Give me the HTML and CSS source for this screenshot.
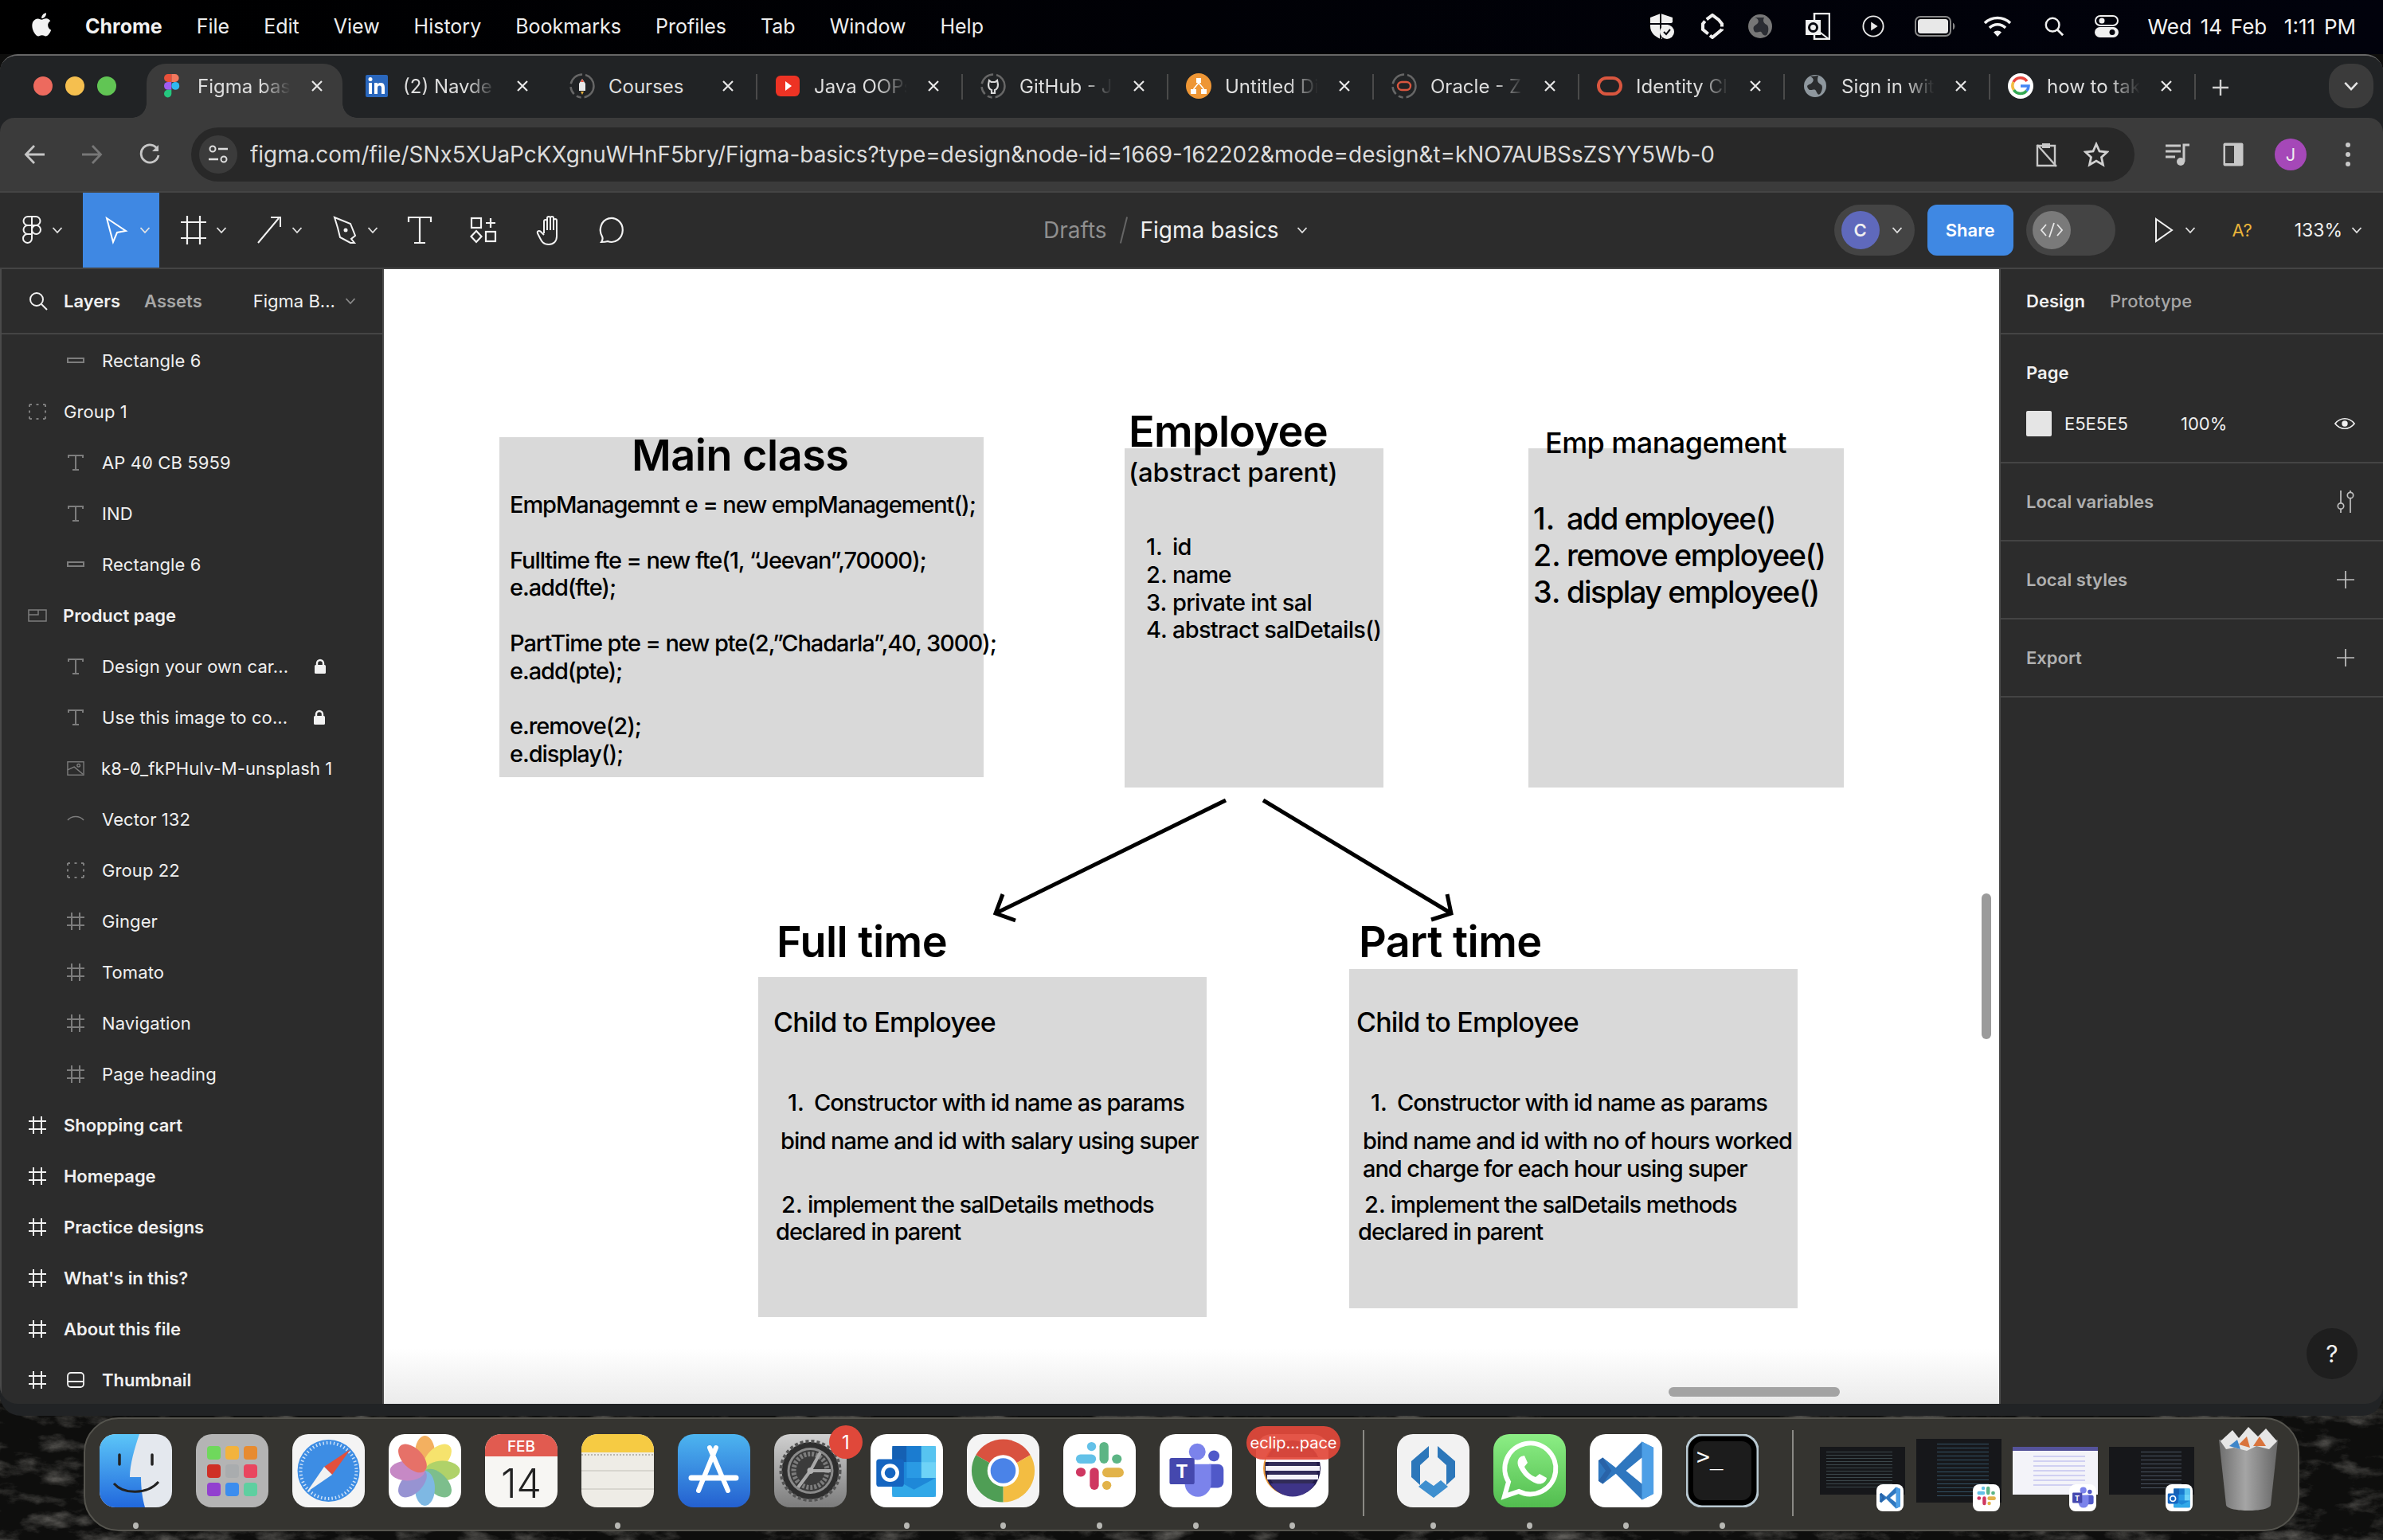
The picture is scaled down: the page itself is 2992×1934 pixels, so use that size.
FILE: index.html
```html
<!DOCTYPE html>
<html lang="en">
<head>
<meta charset="utf-8">
<title>Figma basics</title>
<link rel="stylesheet" href="styles.css">
</head>
<body>
<svg class="wallpaper" aria-hidden="true"><defs><filter id="rock" x="0" y="0" width="100%" height="100%"><feTurbulence type="fractalNoise" baseFrequency="0.02 0.045" numOctaves="6" seed="23"/><feColorMatrix values="0 0 0 0 0.26  0 0 0 0 0.25  0 0 0 0 0.23  1.5 0 0 0 -0.72"/></filter></defs><rect width="100%" height="100%" fill="#0e0e0d"/><rect width="100%" height="100%" filter="url(#rock)"/></svg>

<svg class="defs" aria-hidden="true">
<defs>
<linearGradient id="gBlue" x1="0" y1="0" x2="0" y2="1"><stop offset="0" stop-color="#4db5f0"/><stop offset="1" stop-color="#2460d0"/></linearGradient>
<linearGradient id="gGrey" x1="0" y1="0" x2="0" y2="1"><stop offset="0" stop-color="#d0d0d0"/><stop offset="1" stop-color="#7c7c7c"/></linearGradient>
<linearGradient id="gGreen" x1="0" y1="0" x2="0" y2="1"><stop offset="0" stop-color="#8cee85"/><stop offset="1" stop-color="#52bd4f"/></linearGradient>
<linearGradient id="gTrash" x1="0" y1="0" x2="1" y2="0"><stop offset="0" stop-color="#6e6e6e"/><stop offset=".45" stop-color="#a5a5a5"/><stop offset="1" stop-color="#666"/></linearGradient>
<linearGradient id="gFinder" x1="0" y1="0" x2="0" y2="1"><stop offset="0" stop-color="#5cc6f8"/><stop offset="1" stop-color="#2168dd"/></linearGradient>
</defs>
<symbol id="s-chrome" viewBox="0 0 100 100"><path d="M50 50L15.4 30A40 40 0 0 1 84.6 30Z" fill="#d9523f"/><path d="M50 50L84.6 30A40 40 0 0 1 50 90Z" fill="#f3bd42"/><path d="M50 50L50 90A40 40 0 0 1 15.4 30Z" fill="#4f9e55"/><circle cx="50" cy="50" r="20" fill="#fff"/><circle cx="50" cy="50" r="16" fill="#4a83e8"/></symbol>
<symbol id="s-slack" viewBox="0 0 100 100"><rect x="16" y="26" width="29" height="13" rx="6.5" fill="#63c1e8"/><rect x="32" y="8" width="13" height="13" rx="6.5" fill="#63c1e8"/><rect x="50" y="8" width="13" height="31" rx="6.5" fill="#5cb585"/><rect x="68" y="26" width="14" height="13" rx="6.5" fill="#5cb585"/><rect x="54" y="45" width="31" height="14" rx="7" fill="#e2b34a"/><rect x="54" y="64" width="13" height="13" rx="6.5" fill="#e2b34a"/><rect x="36" y="45" width="13" height="32" rx="6.5" fill="#cf3761"/><rect x="16" y="45" width="14" height="13" rx="6.5" fill="#cf3761"/></symbol>
<symbol id="s-teams" viewBox="0 0 100 100"><circle cx="76" cy="28" r="8" fill="#5059c9"/><rect x="62" y="40" width="28" height="34" rx="8" fill="#5059c9"/><circle cx="52" cy="22" r="12" fill="#7b83eb"/><path d="M34 40H72V68A19 19 0 0 1 34 68Z" fill="#7b83eb"/><rect x="12" y="31" width="36" height="38" rx="3" fill="#4548ae"/></symbol>
<symbol id="s-outlook" viewBox="0 0 100 100"><rect x="30" y="16" width="60" height="70" rx="4" fill="#1e88d8"/><rect x="30" y="16" width="20" height="22" fill="#1560b3"/><rect x="50" y="16" width="20" height="22" fill="#1b7cd0"/><rect x="70" y="16" width="20" height="22" fill="#57c4f0"/><rect x="50" y="38" width="20" height="22" fill="#2a9ae4"/><rect x="70" y="38" width="20" height="22" fill="#6ed3f7"/><path d="M30 60L60 76 90 60V86H30Z" fill="#31a8e8"/><rect x="8" y="34" width="38" height="38" rx="4" fill="#1565c0"/><circle cx="27" cy="53" r="10" fill="none" stroke="#fff" stroke-width="5"/></symbol>
<symbol id="s-vscode" viewBox="0 0 100 100"><path d="M72 10L88 18V82L72 90 36 54 18 68 12 64V36L18 32 36 46Z" fill="#2f77bf"/><path d="M72 10L88 18V82L72 90Z" fill="#4d9fe6"/><path d="M72 32L50 50 72 68Z" fill="#fff"/><path d="M12 36L18 32 30 50 18 68 12 64 22 50Z" fill="#2963a8"/></symbol>
<symbol id="s-t" viewBox="0 0 22 22"><path d="M2 5V2H20V5M11 2V20M7 20H15" fill="none" stroke="currentColor" stroke-width="2"/></symbol>
<symbol id="s-hash" viewBox="0 0 22 22"><path d="M0 6H22M0 16H22M6 0V22M16 0V22" fill="none" stroke="currentColor" stroke-width="2"/></symbol>
<symbol id="s-rect" viewBox="0 0 22 22"><rect x="1" y="8" width="20" height="5" fill="none" stroke="currentColor" stroke-width="2"/></symbol>
<symbol id="s-group" viewBox="0 0 22 22"><path d="M1 2H4M9.500 2H12.500M18 2H21M1 20H4M9.500 20H12.500M18 20H21M1 2V5M21 2V5M1 9.500V12.500M21 9.500V12.500M1 17V20M21 17V20" fill="none" stroke="currentColor" stroke-width="2"/></symbol>
<symbol id="s-lock" viewBox="0 0 16 20"><path d="M4 9V6A4 4 0 0 1 12 6V9" fill="none" stroke="currentColor" stroke-width="2.400"/><rect x="1" y="8" width="14" height="11" rx="1.500" fill="currentColor"/></symbol>
<symbol id="s-x" viewBox="0 0 16 16"><path d="M2 2L14 14M14 2L2 14" fill="none" stroke="currentColor" stroke-width="2.200"/></symbol>
<symbol id="s-chev" viewBox="0 0 14 10"><path d="M1.500 2L7 8 12.500 2" fill="none" stroke="currentColor" stroke-width="1.800"/></symbol>
<symbol id="s-ring" viewBox="0 0 32 32"><circle cx="16" cy="16" r="14.500" fill="none" stroke="#666" stroke-width="2.500" stroke-dasharray="20 4 6 4 10 4 20 4"/></symbol>
</svg>

<header class="menubar">
  <nav class="menu">
    <svg class="apple" viewBox="0 0 24 24"><path fill="#f2f2f2" d="M17.05 12.54c-.03-2.6 2.12-3.85 2.22-3.91-1.21-1.77-3.09-2.01-3.76-2.04-1.6-.16-3.12.94-3.93.94-.81 0-2.07-.92-3.4-.89-1.75.03-3.36 1.02-4.26 2.58-1.82 3.15-.46 7.82 1.3 10.38.87 1.25 1.9 2.66 3.26 2.61 1.31-.05 1.8-.85 3.38-.85 1.58 0 2.02.85 3.41.82 1.41-.02 2.3-1.28 3.16-2.54.99-1.45 1.4-2.86 1.43-2.93-.03-.01-2.74-1.05-2.77-4.17zM14.47 4.9c.72-.87 1.2-2.08 1.07-3.29-1.04.04-2.29.69-3.03 1.56-.67.77-1.25 2-1.09 3.19 1.15.09 2.33-.59 3.05-1.46z"/></svg>
    <b class="menu-app">Chrome</b><span>File</span><span>Edit</span><span>View</span><span>History</span><span>Bookmarks</span><span>Profiles</span><span>Tab</span><span>Window</span><span>Help</span>
  </nav>
  <div class="status">
    <svg class="st st-shield" viewBox="0 0 32 34"><path d="M15 1L2 6V17C2 25 8 30 15 33L17 33 14 22 30 12V6Z" fill="#f0f0f0"/><path d="M15 1V33M2 14H30" stroke="#05060e" stroke-width="2"/><circle cx="23" cy="24" r="9" fill="#f0f0f0"/><path d="M19 24L22 27 27 21" fill="none" stroke="#05060e" stroke-width="2"/></svg>
    <svg class="st st-a" viewBox="0 0 28 32"><path d="M14 2L22 8 26 13V20L14 30 2 20V13L6 8Z" fill="none" stroke="#f0f0f0" stroke-width="4" stroke-dasharray="20 3"/></svg>
    <svg class="st st-b" viewBox="0 0 32 32"><circle cx="16" cy="16" r="15" fill="#777"/><path d="M9 5C13 6 15 9 13 12S6 15 8 21 16 20 18 24 22 28 24 27 28 16 24 14 19 9 21 5" fill="#2b2d33"/></svg>
    <svg class="st st-c" viewBox="0 0 32 34"><rect x="12" y="1" width="19" height="32" fill="none" stroke="#f0f0f0" stroke-width="2.500"/><path d="M13 20L30 33" stroke="#f0f0f0" stroke-width="2"/><rect x="1" y="9" width="19" height="19" fill="#f0f0f0"/><circle cx="10.500" cy="18.500" r="5" fill="none" stroke="#05060e" stroke-width="3"/></svg>
    <svg class="st st-d" viewBox="0 0 30 30"><circle cx="15" cy="15" r="13.500" fill="none" stroke="#e8e8e8" stroke-width="2"/><path d="M12 9L21 15 12 21Z" fill="#e8e8e8"/></svg>
    <svg class="st st-batt" viewBox="0 0 52 26"><rect x="1" y="1" width="44" height="24" rx="6" fill="none" stroke="#888" stroke-width="2"/><rect x="4" y="4" width="38" height="18" rx="3.500" fill="#e8e8e8"/><path d="M48 9C50.500 10 50.500 16 48 17" fill="#888" stroke="#888"/></svg>
    <svg class="st st-wifi" viewBox="0 0 36 28"><path d="M2 10A23 23 0 0 1 34 10M8 16A14 14 0 0 1 28 16" fill="none" stroke="#f2f2f2" stroke-width="3.600"/><path d="M13 21.500A7 7 0 0 1 23 21.500L18 27Z" fill="#f2f2f2"/></svg>
    <svg class="st st-search" viewBox="0 0 28 28"><circle cx="12" cy="12" r="9" fill="none" stroke="#f0f0f0" stroke-width="2.600"/><path d="M18.500 18.500L26 26" stroke="#f0f0f0" stroke-width="3"/></svg>
    <svg class="st st-ctrl" viewBox="0 0 30 28"><rect x="1" y="1" width="28" height="12" rx="6" fill="none" stroke="#f0f0f0" stroke-width="2"/><circle cx="9" cy="7" r="3.500" fill="#f0f0f0"/><rect x="0" y="15" width="30" height="13" rx="6.500" fill="#f0f0f0"/><circle cx="22" cy="21.500" r="3.500" fill="#05060e"/></svg>
    <span class="clock">Wed 14 Feb&nbsp;&nbsp;1:11 PM</span>
  </div>
</header>

<main class="window">
  <div class="tabstrip">
    <div class="lights"><i class="light red"></i><i class="light yellow"></i><i class="light green"></i></div>
    <div class="tabs">
      <div class="tab active">
        <i class="flare flare-l"></i><i class="flare flare-r"></i>
        <svg class="fav" viewBox="0 0 32 32"><g transform="translate(7 1) scale(.62)"><path d="M0 8A8 8 0 0 1 8 0H15V16H8A8 8 0 0 1 0 8Z" fill="#e8503a"/><path d="M15 0H22A8 8 0 0 1 22 16H15Z" fill="#f2785e"/><path d="M0 24A8 8 0 0 1 8 16H15V32H8A8 8 0 0 1 0 24Z" fill="#a05cf0"/><circle cx="23" cy="24" r="8" fill="#2fb8f0"/><path d="M0 40A8 8 0 0 1 8 32H15V40A7.500 7.500 0 0 1 0 40Z" fill="#25c77f"/></g></svg>
        <span class="tab-t">Figma bas</span><svg class="tab-x"><use href="#s-x"/></svg>
      </div>
      <div class="tab">
        <svg class="fav" viewBox="0 0 32 32"><rect x="2" y="2" width="28" height="28" rx="2" fill="#2a67bd"/><rect x="6" y="12" width="4" height="14" fill="#fff"/><circle cx="8" cy="7.500" r="2.500" fill="#fff"/><path d="M13 12H17V14C18 12 20 12 21.500 12 25 12 26 15 26 18V26H22V19C22 17 21.500 15.500 19.500 15.500S17 17 17 19V26H13Z" fill="#fff"/></svg>
        <span class="tab-t">(2) Navde</span><svg class="tab-x"><use href="#s-x"/></svg>
      </div>
      <div class="tab">
        <svg class="fav" viewBox="0 0 32 32"><use href="#s-ring"/><path d="M16 7L20 13V22H12V13Z" fill="#e8e8e8"/><path d="M16 7L18 11H14Z" fill="#e2523f"/><path d="M14 23H18L16 27Z" fill="#e6b13d"/></svg>
        <span class="tab-t tab-full">Courses</span><svg class="tab-x"><use href="#s-x"/></svg>
      </div>
      <div class="tab">
        <svg class="fav" viewBox="0 0 32 32"><rect x="1" y="3" width="30" height="26" rx="6" fill="#ed3324"/><path d="M13 10L21 16 13 22Z" fill="#fff"/></svg>
        <span class="tab-t">Java OOPs</span><svg class="tab-x"><use href="#s-x"/></svg>
      </div>
      <div class="tab">
        <svg class="fav" viewBox="0 0 32 32"><use href="#s-ring"/><path d="M11 9L13.500 11H18.500L21 9 22 14C22 19 20 20.500 18 21V25H14V21C12 20.500 10 19 10 14Z" fill="none" stroke="#d8d8d8" stroke-width="2.200"/></svg>
        <span class="tab-t">GitHub - J</span><svg class="tab-x"><use href="#s-x"/></svg>
      </div>
      <div class="tab">
        <svg class="fav" viewBox="0 0 32 32"><circle cx="16" cy="16" r="16" fill="#ee9635"/><rect x="13" y="6" width="6" height="6" fill="#fff"/><rect x="6" y="20" width="7" height="6" fill="#fff"/><rect x="19" y="20" width="7" height="6" fill="#fff"/><path d="M16 12L9.500 20M16 12L22.500 20" stroke="#fff" stroke-width="1.600"/></svg>
        <span class="tab-t">Untitled Di</span><svg class="tab-x"><use href="#s-x"/></svg>
      </div>
      <div class="tab">
        <svg class="fav" viewBox="0 0 32 32"><use href="#s-ring"/><rect x="8" y="11" width="16" height="10" rx="5" fill="none" stroke="#d9563f" stroke-width="2.400"/></svg>
        <span class="tab-t">Oracle - Z</span><svg class="tab-x"><use href="#s-x"/></svg>
      </div>
      <div class="tab">
        <svg class="fav" viewBox="0 0 32 32"><rect x="2" y="6" width="28" height="20" rx="10" fill="none" stroke="#d9563f" stroke-width="4"/></svg>
        <span class="tab-t">Identity Cl</span><svg class="tab-x"><use href="#s-x"/></svg>
      </div>
      <div class="tab">
        <svg class="fav" viewBox="0 0 32 32"><circle cx="16" cy="16" r="14" fill="#8e979e"/><path d="M10 4C14 6 15 9 12 12S4 14 7 19 15 18 17 22 20 28 22 26 27 16 23 14 18 9 20 3" fill="#2a2c2e"/></svg>
        <span class="tab-t">Sign in wit</span><svg class="tab-x"><use href="#s-x"/></svg>
      </div>
      <div class="tab">
        <svg class="fav" viewBox="0 0 32 32"><circle cx="16" cy="16" r="16" fill="#fff"/><path d="M24 10A10 10 0 0 0 7 11" fill="none" stroke="#e8453c" stroke-width="3.600"/><path d="M7 11A10 10 0 0 0 7.500 21" fill="none" stroke="#f3bd42" stroke-width="3.600"/><path d="M7.500 21A10 10 0 0 0 23.500 22" fill="none" stroke="#34a853" stroke-width="3.600"/><path d="M23.500 22C25 20.500 26 18.500 26 16H16" fill="none" stroke="#4285f4" stroke-width="3.600"/></svg>
        <span class="tab-t">how to tak</span><svg class="tab-x"><use href="#s-x"/></svg>
      </div>
    </div>
    <svg class="tab-plus" viewBox="0 0 20 20"><path d="M10 0V20M0 10H20" stroke="#d0d0d0" stroke-width="2.400"/></svg>
    <div class="tab-more"><svg class="tab-more-i"><use href="#s-chev"/></svg></div>
  </div>

  <div class="chrome-bar">
    <svg class="nav-i nav-back" viewBox="0 0 28 28"><path d="M26 14H3M13 3L2.500 14 13 25" fill="none" stroke="#c6c6c6" stroke-width="2.800"/></svg>
    <svg class="nav-i nav-fwd" viewBox="0 0 28 28"><path d="M2 14H25M15 3L25.500 14 15 25" fill="none" stroke="#777" stroke-width="2.800"/></svg>
    <svg class="nav-i nav-rel" viewBox="0 0 28 28"><path d="M24 8A11 11 0 1 0 25 15" fill="none" stroke="#c6c6c6" stroke-width="2.800"/><path d="M25 2V10H17Z" fill="#c6c6c6"/></svg>
    <div class="omnibox">
      <span class="site-i"><svg viewBox="0 0 28 28"><circle cx="7" cy="7" r="3.500" fill="none" stroke="#ddd" stroke-width="2"/><path d="M14 7H26M2 20H14" stroke="#ddd" stroke-width="2.400"/><circle cx="21" cy="20" r="3.500" fill="none" stroke="#ddd" stroke-width="2"/></svg></span>
      <span class="url">figma.com/file/SNx5XUaPcKXgnuWHnF5bry/Figma-basics?type=design&amp;node-id=1669-162202&amp;mode=design&amp;t=kNO7AUBSsZSYY5Wb-0</span>
      <svg class="omni-i omni-clip" viewBox="0 0 28 32"><path d="M9 5H3V30H25V5H19" fill="none" stroke="#c8c8c8" stroke-width="2.400"/><rect x="9" y="2" width="10" height="6" fill="#c8c8c8"/><path d="M3 4L27 31" stroke="#c8c8c8" stroke-width="2.400"/></svg>
      <svg class="omni-i omni-star" viewBox="0 0 32 32"><path d="M16 3L20 12 29.500 13 22.500 19.500 24.500 29 16 24 7.500 29 9.500 19.500 2.500 13 12 12Z" fill="none" stroke="#d0d0d0" stroke-width="2.800"/></svg>
    </div>
    <div class="chrome-right">
      <svg class="cr-i cr-list" viewBox="0 0 32 32"><path d="M1 5H20M1 12H20M1 19H13" stroke="#c8c8c8" stroke-width="3"/><path d="M24 25V4H31" fill="none" stroke="#c8c8c8" stroke-width="3"/><circle cx="20" cy="25" r="5" fill="#c8c8c8"/></svg>
      <svg class="cr-i cr-side" viewBox="0 0 28 32"><rect x="1.500" y="1.500" width="25" height="29" rx="2" fill="#c8c8c8"/><rect x="4" y="5" width="11" height="22" fill="#3b3b3b"/></svg>
      <span class="cr-avatar">J</span>
      <svg class="cr-dots" viewBox="0 0 8 32"><circle cx="4" cy="4" r="3" fill="#c8c8c8"/><circle cx="4" cy="16" r="3" fill="#c8c8c8"/><circle cx="4" cy="28" r="3" fill="#c8c8c8"/></svg>
    </div>
  </div>

  <div class="figma-bar">
    <div class="tools">
      <div class="tool tool-logo"><svg class="ti" viewBox="0 0 24 36"><path d="M12 1H7A5.500 5.500 0 0 0 7 12H12ZM12 1H17A5.500 5.500 0 0 1 17 12H12ZM12 12H7A5.500 5.500 0 0 0 7 23H12ZM12 23H7A5.500 5.500 0 1 0 12 28.500ZM12 17.500A5.500 5.500 0 1 0 23 17.500 5.500 5.500 0 1 0 12 17.500Z" fill="none" stroke="#f2f2f2" stroke-width="2"/></svg><svg class="chev"><use href="#s-chev"/></svg></div>
      <div class="tool tool-on"><svg class="ti" viewBox="0 0 36 36"><path d="M5 3L29 19 18 21 13 33Z" fill="none" stroke="#fff" stroke-width="2"/></svg><svg class="chev"><use href="#s-chev"/></svg></div>
      <div class="tool"><svg class="ti" viewBox="0 0 36 36"><path d="M2 8H34M2 28H34M10 0V36M26 0V36" fill="none" stroke="#f2f2f2" stroke-width="2.200"/></svg><svg class="chev"><use href="#s-chev"/></svg></div>
      <div class="tool"><svg class="ti" viewBox="0 0 36 36"><path d="M4 34L30 3M20 2H32V14" fill="none" stroke="#f2f2f2" stroke-width="2"/></svg><svg class="chev"><use href="#s-chev"/></svg></div>
      <div class="tool"><svg class="ti" viewBox="0 0 36 36"><path d="M5 2L25 10 31 25 26 29 30 34 25 34 12 27 9 15Z" fill="none" stroke="#f2f2f2" stroke-width="2"/><circle cx="19" cy="18" r="2.500" fill="#f2f2f2"/></svg><svg class="chev"><use href="#s-chev"/></svg></div>
      <div class="tool tool-plain"><svg class="ti" viewBox="0 0 36 36"><path d="M4 8V2H32V8M18 2V34M11 34H25" fill="none" stroke="#f2f2f2" stroke-width="2.200"/></svg></div>
      <div class="tool tool-plain"><svg class="ti" viewBox="0 0 36 36"><rect x="3" y="3" width="12" height="12" fill="none" stroke="#f2f2f2" stroke-width="2.200"/><path d="M21 9H33M27 3V15" stroke="#f2f2f2" stroke-width="2.200"/><path d="M9 19L15.500 26 9 33 2.500 26Z" fill="none" stroke="#f2f2f2" stroke-width="2.200"/><rect x="21" y="20" width="12" height="12" fill="none" stroke="#f2f2f2" stroke-width="2.200"/></svg></div>
      <div class="tool tool-plain"><svg class="ti ti-hand" viewBox="-4 0 36 40"><path d="M10 24V9A2 2 0 0 1 14 9V20M14 20V5A2 2 0 0 1 18 5V20M18 20V5A2 2 0 0 1 22 5V20M22 20V8A2 2 0 0 1 26 8V28C26 34 22 38 16 38 9 38 7 34 5 30L2 24C1 21 4 20 6 22L10 26" fill="none" stroke="#f2f2f2" stroke-width="2"/></svg></div>
      <div class="tool tool-plain"><svg class="ti" viewBox="2 0 36 36"><path d="M8 33C10 30 10 28 9 26A14 15 0 1 1 16 32C13 33 11 33 8 33Z" fill="none" stroke="#f2f2f2" stroke-width="2.200"/></svg></div>
    </div>
    <div class="crumb"><span class="crumb-a">Drafts</span><i class="crumb-sl"></i><span class="crumb-b">Figma basics</span><svg class="chev"><use href="#s-chev"/></svg></div>
    <div class="fig-right">
      <div class="pill"><span class="avatar-c">C</span><svg class="chev"><use href="#s-chev"/></svg></div>
      <button class="share">Share</button>
      <div class="devtoggle"><span class="dev-knob"><svg viewBox="0 0 30 20"><path d="M8 3L2 10 8 17M22 3L28 10 22 17M18 1L12 19" fill="none" stroke="#e8e8e8" stroke-width="1.800"/></svg></span></div>
      <svg class="play" viewBox="0 0 24 32"><path d="M2 2L22 16 2 30Z" fill="none" stroke="#f2f2f2" stroke-width="2"/></svg>
      <svg class="chev chev-play"><use href="#s-chev"/></svg>
      <span class="aq">A?</span>
      <span class="zoom-v">133%</span>
      <svg class="chev chev-zoom"><use href="#s-chev"/></svg>
    </div>
  </div>

  <div class="workspace">
    <aside class="layers">
      <div class="lp-head">
        <svg class="lp-search" viewBox="0 0 24 24"><circle cx="10" cy="10" r="8" fill="none" stroke="#f0f0f0" stroke-width="2"/><path d="M16 16L23 23" stroke="#f0f0f0" stroke-width="2"/></svg>
        <b class="lp-tab">Layers</b><b class="lp-tab lp-dim">Assets</b>
        <span class="lp-page">Figma B...</span><svg class="chev lp-chev"><use href="#s-chev"/></svg>
      </div>
      <ul class="rows">
        <li class="row child"><svg class="li"><use href="#s-rect"/></svg>Rectangle 6</li>
        <li class="row"><svg class="li li-dim"><use href="#s-group"/></svg>Group 1</li>
        <li class="row child"><svg class="li"><use href="#s-t"/></svg>AP 40 CB 5959</li>
        <li class="row child"><svg class="li"><use href="#s-t"/></svg>IND</li>
        <li class="row child"><svg class="li"><use href="#s-rect"/></svg>Rectangle 6</li>
        <li class="row strong"><svg class="li li-dim li-w" viewBox="0 0 24 16"><path d="M1 1H23V15H1ZM1 7H13V1" fill="none" stroke="currentColor" stroke-width="1.500"/></svg>Product page</li>
        <li class="row child"><svg class="li"><use href="#s-t"/></svg>Design your own car...<svg class="lock"><use href="#s-lock"/></svg></li>
        <li class="row child"><svg class="li"><use href="#s-t"/></svg>Use this image to co...<svg class="lock"><use href="#s-lock"/></svg></li>
        <li class="row child"><svg class="li li-w" viewBox="0 0 24 24"><rect x="1" y="3" width="22" height="18" fill="none" stroke="currentColor" stroke-width="1.500"/><path d="M1 14L10 10 22 20" fill="none" stroke="currentColor" stroke-width="1.500"/><circle cx="16" cy="8" r="2" fill="none" stroke="currentColor" stroke-width="1.500"/></svg>k8-0_fkPHulv-M-unsplash 1</li>
        <li class="row child"><svg class="li" viewBox="0 0 22 22"><path d="M1 12C6 6 16 6 21 12" fill="none" stroke="currentColor" stroke-width="1.600"/></svg>Vector 132</li>
        <li class="row child"><svg class="li"><use href="#s-group"/></svg>Group 22</li>
        <li class="row child"><svg class="li"><use href="#s-hash"/></svg>Ginger</li>
        <li class="row child"><svg class="li"><use href="#s-hash"/></svg>Tomato</li>
        <li class="row child"><svg class="li"><use href="#s-hash"/></svg>Navigation</li>
        <li class="row child"><svg class="li"><use href="#s-hash"/></svg>Page heading</li>
        <li class="row strong"><svg class="li"><use href="#s-hash"/></svg>Shopping cart</li>
        <li class="row strong"><svg class="li"><use href="#s-hash"/></svg>Homepage</li>
        <li class="row strong"><svg class="li"><use href="#s-hash"/></svg>Practice designs</li>
        <li class="row strong"><svg class="li"><use href="#s-hash"/></svg>What's in this?</li>
        <li class="row strong"><svg class="li"><use href="#s-hash"/></svg>About this file</li>
        <li class="row strong"><svg class="li"><use href="#s-hash"/></svg><svg class="li li-thumb" viewBox="0 0 22 22"><rect x="1" y="2" width="20" height="18" rx="4" fill="none" stroke="currentColor" stroke-width="1.800"/><path d="M1 13H21" stroke="currentColor" stroke-width="1.800"/></svg>Thumbnail</li>
      </ul>
    </aside>

    <section class="canvas">
      <div class="box box-main"></div>
      <div class="box box-emp"></div>
      <div class="box box-mgmt"></div>
      <div class="box box-full"></div>
      <div class="box box-part"></div>

      <div class="node big n-main-h">Main class</div>
      <div class="node body n-main-b">EmpManagemnt e = new empManagement();

Fulltime fte = new fte(1, “Jeevan”,70000);
e.add(fte);

PartTime pte = new pte(2,”Chadarla”,40, 3000);
e.add(pte);

e.remove(2);
e.display();</div>

      <div class="node big n-emp-h">Employee</div>
      <div class="node sub n-emp-s">(abstract parent)</div>
      <ol class="node body num n-emp-l"><li>id</li><li>name</li><li>private int sal</li><li>abstract salDetails()</li></ol>

      <div class="node mgmt-h n-mg-h">Emp management</div>
      <ol class="node mgmt-l num n-mg-l"><li>add employee()</li><li>remove employee()</li><li>display employee()</li></ol>

      <svg class="arrows" viewBox="0 0 2028 1425"><path d="M1057 667L768 809M777 785L768 809 793 818M1104 667L1340 809M1335 785L1340 809 1315 817" fill="none" stroke="#000" stroke-width="5"/></svg>

      <div class="node big n-full-h">Full time</div>
      <div class="node child-h n-full-c">Child to Employee</div>
      <ol class="node body num n-full-1"><li>Constructor with id name as params</li></ol>
      <div class="node body n-full-2">bind name and id with salary using super</div>
      <ol class="node body num n-full-3" start="2"><li>implement the salDetails methods</li></ol>
      <div class="node body n-full-4">declared in parent</div>

      <div class="node big n-part-h">Part time</div>
      <div class="node child-h n-part-c">Child to Employee</div>
      <ol class="node body num n-part-1"><li>Constructor with id name as params</li></ol>
      <div class="node body n-part-2">bind name and id with no of hours worked
and charge for each hour using super</div>
      <ol class="node body num n-part-3" start="2"><li>implement the salDetails methods</li></ol>
      <div class="node body n-part-4">declared in parent</div>

      <i class="scroll-v"></i><i class="scroll-h"></i>
    </section>

    <aside class="props">
      <div class="pr-head"><b class="pr-tab">Design</b><b class="pr-tab pr-dim">Prototype</b></div>
      <div class="pr-page">
        <b class="pr-label">Page</b>
        <div class="pr-fill"><i class="swatch"></i><span class="hex">E5E5E5</span><span class="pct">100%</span>
          <svg class="pr-eye" viewBox="0 0 28 18"><path d="M1 9C8 0 20 0 27 9 20 18 8 18 1 9Z" fill="none" stroke="#f0f0f0" stroke-width="1.800"/><circle cx="14" cy="9" r="4" fill="#f0f0f0"/></svg>
        </div>
      </div>
      <div class="pr-sec"><b>Local variables</b><svg class="pr-i" viewBox="0 0 24 28"><path d="M6 0V16M6 23V28M18 0V2M18 10V28" stroke="#c0c0c0" stroke-width="1.700"/><circle cx="6" cy="19.500" r="3.700" fill="none" stroke="#c0c0c0" stroke-width="1.700"/><circle cx="18" cy="6" r="3.700" fill="none" stroke="#c0c0c0" stroke-width="1.700"/></svg></div>
      <div class="pr-sec"><b>Local styles</b><svg class="pr-i" viewBox="0 0 24 24"><path d="M12 1V23M1 12H23" stroke="#c0c0c0" stroke-width="1.700"/></svg></div>
      <div class="pr-sec"><b>Export</b><svg class="pr-i" viewBox="0 0 24 24"><path d="M12 1V23M1 12H23" stroke="#c0c0c0" stroke-width="1.700"/></svg></div>
      <button class="help">?</button>
    </aside>
  </div>
</main>

<footer class="dock">
  <div class="app run"><svg viewBox="0 0 91 92"><rect width="91" height="92" rx="20" fill="#e4e8ee"/><path d="M20 0H50C44 18 38 38 38 54H52C52 68 54 82 57 92H20A20 20 0 0 1 0 72V20A20 20 0 0 1 20 0Z" fill="url(#gFinder)"/><path d="M25 26V38M66 26V38" stroke="#222" stroke-width="3.500" stroke-linecap="round"/><path d="M18 62C30 76 60 76 74 60" fill="none" stroke="#222" stroke-width="3"/></svg></div>
  <div class="app"><svg viewBox="0 0 91 92"><rect width="91" height="92" rx="20" fill="#b4b4b4"/><rect x="14" y="15" width="17" height="17" rx="4" fill="#6fd85c"/><rect x="37" y="15" width="17" height="17" rx="4" fill="#f3b33d"/><rect x="60" y="15" width="17" height="17" rx="4" fill="#e78b30"/><rect x="14" y="38" width="17" height="17" rx="4" fill="#cf2f25"/><rect x="37" y="38" width="17" height="17" rx="4" fill="#a9acae"/><rect x="60" y="38" width="17" height="17" rx="4" fill="#e9465f"/><rect x="14" y="61" width="17" height="17" rx="4" fill="#9240cf"/><rect x="37" y="61" width="17" height="17" rx="4" fill="#3c8dee"/><rect x="60" y="61" width="17" height="17" rx="4" fill="#5ecfa0"/></svg></div>
  <div class="app"><svg viewBox="0 0 91 92"><rect width="91" height="92" rx="20" fill="#f4f4f4"/><circle cx="45.500" cy="46" r="39" fill="#3d8de4"/><circle cx="45.500" cy="46" r="35" fill="none" stroke="#cfe2f7" stroke-width="4" stroke-dasharray="1.500 3"/><path d="M73 19L50 51 40 41Z" fill="#e2503d"/><path d="M18 73L40 41 50 51Z" fill="#f2f2f2"/></svg></div>
  <div class="app"><svg viewBox="0 0 91 92"><rect width="91" height="92" rx="20" fill="#fff"/><g transform="translate(45.500 46)" opacity=".78"><ellipse cy="-22" rx="12.500" ry="22" fill="#f09a34"/><ellipse cy="-22" rx="12.500" ry="22" fill="#f4dc45" transform="rotate(45)"/><ellipse cy="-22" rx="12.500" ry="22" fill="#9ac63f" transform="rotate(90)"/><ellipse cy="-22" rx="12.500" ry="22" fill="#59ad6d" transform="rotate(135)"/><ellipse cy="-22" rx="12.500" ry="22" fill="#5aa5dc" transform="rotate(180)"/><ellipse cy="-22" rx="12.500" ry="22" fill="#7a76c6" transform="rotate(225)"/><ellipse cy="-22" rx="12.500" ry="22" fill="#b768b5" transform="rotate(270)"/><ellipse cy="-22" rx="12.500" ry="22" fill="#e04a3e" transform="rotate(315)"/></g></svg></div>
  <div class="app"><svg viewBox="0 0 91 92"><rect width="91" height="92" rx="20" fill="#f7f6f3"/><path d="M0 28V20A20 20 0 0 1 20 0H71A20 20 0 0 1 91 20V28Z" fill="#e15b50"/><text x="45.500" y="22" text-anchor="middle" class="svg-feb">FEB</text><text x="45.500" y="80" text-anchor="middle" class="svg-14">14</text></svg></div>
  <div class="app run"><svg viewBox="0 0 91 92"><rect width="91" height="92" rx="20" fill="#eeece6"/><path d="M0 23V20A20 20 0 0 1 20 0H71A20 20 0 0 1 91 20V23Z" fill="#f6cb43"/><path d="M0 26H91" stroke="#b9b7b0" stroke-width="2" stroke-dasharray="2 2"/><path d="M0 46H91M0 69H91" stroke="#d8d6cf" stroke-width="2"/></svg></div>
  <div class="app"><svg viewBox="0 0 91 92"><rect width="91" height="92" rx="20" fill="url(#gBlue)"/><path d="M48 17L26 71M40 17L63 71" stroke="#fff" stroke-width="6" stroke-linecap="round"/><path d="M17 55H73" stroke="#fff" stroke-width="7" stroke-linecap="round"/></svg></div>
  <div class="app"><svg viewBox="0 0 91 92"><rect width="91" height="92" rx="20" fill="url(#gGrey)"/><circle cx="45.500" cy="46" r="36" fill="#2e2e2e"/><circle cx="45.500" cy="46" r="37" fill="none" stroke="#555" stroke-width="4" stroke-dasharray="4 3"/><circle cx="45.500" cy="46" r="29" fill="#8a8a8a"/><circle cx="45.500" cy="46" r="26" fill="#3b3b3b"/><circle cx="45.500" cy="46" r="21" fill="none" stroke="#7c7c7c" stroke-width="6" stroke-dasharray="3 2"/><path d="M45.500 46L58 23M45.500 46H71M45.500 46L30 67" stroke="#a8a8a8" stroke-width="4"/><circle cx="45.500" cy="46" r="4" fill="#b0b0b0"/></svg><span class="badge-n">1</span></div>
  <div class="app run"><svg viewBox="0 0 91 92"><rect width="91" height="92" rx="20" fill="#fff"/><use href="#s-outlook" width="91" height="92"/></svg></div>
  <div class="app run"><svg viewBox="0 0 91 92"><rect width="91" height="92" rx="20" fill="#f4f4f4"/><use href="#s-chrome" x="-4" y="-4" width="99" height="100"/></svg></div>
  <div class="app run"><svg viewBox="0 0 91 92"><rect width="91" height="92" rx="20" fill="#fff"/><use href="#s-slack" x="2" y="3" width="87" height="87"/></svg></div>
  <div class="app run"><svg viewBox="0 0 91 92"><rect width="91" height="92" rx="20" fill="#fff"/><use href="#s-teams" x="2" y="3" width="87" height="87"/><text x="28" y="55" text-anchor="middle" class="svg-t">T</text></svg></div>
  <div class="app run"><svg viewBox="0 0 91 92"><rect width="91" height="92" rx="20" fill="#fff"/><circle cx="43" cy="43" r="34" fill="#ee9a35"/><circle cx="46" cy="43" r="35" fill="#201a4a"/><circle cx="46" cy="43" r="31" fill="#fff" opacity=".08"/><path d="M12 32H80M12 43H80M14 54H78" stroke="#f4f2fa" stroke-width="6"/><path d="M18 62A32 32 0 0 0 74 62Z" fill="#3e3488"/></svg><span class="badge-t">eclip...pace</span></div>
  <i class="dock-sep"></i>
  <div class="app run"><svg viewBox="0 0 91 92"><rect width="91" height="92" rx="20" fill="#f2f2f2"/><path d="M40 15L18 34V54L29 64V39L40 29ZM51 15L73 34V54L62 64V39L51 29Z" fill="#2c77ba"/><path d="M46 80L27 66 36 58 46 65 55 58 64 66Z" fill="#3e8fcf"/></svg></div>
  <div class="app run"><svg viewBox="0 0 91 92"><rect width="91" height="92" rx="20" fill="url(#gGreen)"/><path d="M14 78L19 60A32 32 0 1 1 32 72Z" fill="none" stroke="#fff" stroke-width="6"/><path d="M35 28C31 30 29 35 32 42 37 52 44 58 54 62 60 64 66 61 67 55L58 50 53 54C47 52 42 47 39 41L43 36 39 27Z" fill="#fff"/></svg></div>
  <div class="app run"><svg viewBox="0 0 91 92"><rect width="91" height="92" rx="20" fill="#fff"/><use href="#s-vscode" width="91" height="92"/></svg></div>
  <div class="app run"><svg viewBox="0 0 91 92"><rect width="91" height="92" rx="20" fill="#000"/><rect x="1" y="1" width="89" height="90" rx="19" fill="none" stroke="#b9c9d2" stroke-width="3"/><rect x="9" y="9" width="73" height="74" rx="12" fill="#1c1c1c"/><text x="13" y="38" class="svg-term">&gt;_</text></svg></div>
  <i class="dock-sep dock-sep2"></i>
  <div class="thumbs">
    <div class="thumb thumb-dark"><i class="thumb-lines"></i><svg class="thumb-i" viewBox="0 0 34 34"><rect width="34" height="34" rx="8" fill="#fff"/><use href="#s-vscode" width="34" height="34"/></svg></div>
    <div class="thumb thumb-dark thumb-tall"><i class="thumb-lines thumb-slack"></i><svg class="thumb-i" viewBox="0 0 34 34"><rect width="34" height="34" rx="8" fill="#fff"/><use href="#s-slack" width="34" height="34"/></svg></div>
    <div class="thumb thumb-light"><i class="thumb-lines thumb-teams"></i><svg class="thumb-i" viewBox="0 0 34 34"><rect width="34" height="34" rx="8" fill="#fff"/><use href="#s-teams" width="34" height="34"/><text x="10" y="20.500" text-anchor="middle" class="svg-t2">T</text></svg></div>
    <div class="thumb thumb-dark"><i class="thumb-lines thumb-mail"></i><svg class="thumb-i" viewBox="0 0 34 34"><rect width="34" height="34" rx="8" fill="#fff"/><use href="#s-outlook" width="34" height="34"/></svg></div>
  </div>
  <svg class="trash" viewBox="0 0 80 106"><path d="M3 16L12 98C13 103 27 105 40 105S67 103 68 98L77 16Z" fill="url(#gTrash)"/><path d="M5 18L20 4 28 14 40 0 52 12 62 2 76 18 66 28 50 24 38 30 22 26 12 28Z" fill="#e6e6e6"/><path d="M28 22L38 12 42 26ZM46 24L54 12 62 24Z" fill="#d9743d"/><path d="M16 24L26 16 30 28Z" fill="#3f86c9"/></svg>
</footer>
</body>
</html>
```

FILE: styles.css
```css
* { box-sizing: border-box; }
html, body { margin: 0; padding: 0; }
body {
  position: relative;
  width: 2992px;
  height: 1934px;
  overflow: hidden;
  display: flex;
  flex-direction: column;
  background: #0e0e0d;
  font-family: Inter, "Noto Sans", sans-serif;
  color: #f0f0f0;
}
.wallpaper { position: absolute; left: 0; top: 1700px; width: 2992px; height: 234px; }
.defs { position: absolute; width: 0; height: 0; }
.svg-t { font: 700 23px Inter, sans-serif; fill: #fff; }
.svg-t2 { font: 700 9px Inter, sans-serif; fill: #fff; }
.svg-feb { font: 500 19px Inter, sans-serif; fill: #fff; }
.svg-14 { font: 300 50px Inter, sans-serif; fill: #222; }
.svg-term { font: 400 28px "DejaVu Sans Mono", monospace; fill: #fff; }

/* menu bar */
.menubar {
  position: relative;
  flex: 0 0 68px;
  display: flex;
  align-items: center;
  justify-content: space-between;
  background: linear-gradient(90deg, #000 0%, #01020c 100%);
  font-size: 25px;
  padding: 0 34px 2px 36px;
}
.menu { display: flex; align-items: center; gap: 43px; }
.menu span { color: #eee; font-weight: 400; }
.menu-app { font-weight: 700; color: #f2f2f2; margin-left: -6px; }
.apple { width: 34px; height: 36px; margin-bottom: 4px; }
.status { display: flex; align-items: center; }
.st { display: block; flex: none; }
.st-shield { width: 32px; height: 34px; margin-right: 34px; }
.st-a { width: 28px; height: 32px; margin-right: 30px; }
.st-b { width: 32px; height: 32px; margin-right: 40px; }
.st-c { width: 32px; height: 34px; margin-right: 40px; }
.st-d { width: 28px; height: 30px; margin-right: 38px; }
.st-batt { width: 52px; height: 26px; margin-right: 34px; }
.st-wifi { width: 36px; height: 28px; margin-right: 40px; }
.st-search { width: 26px; height: 28px; margin-right: 38px; }
.st-ctrl { width: 30px; height: 28px; margin-right: 36px; }
.clock { font-size: 26px; word-spacing: 3.500px; color: #f2f2f2; white-space: nowrap; }

/* window */
.window {
  position: relative;
  flex: 0 0 1710px;
  display: flex;
  flex-direction: column;
  background: #212325;
  border-top: 2px solid #666;
  border-radius: 22px 22px 26px 26px;
  overflow: hidden;
}
.tabstrip { flex: 0 0 78px; display: flex; align-items: flex-start; background: #212325; }
.lights { display: flex; gap: 16px; padding: 26px 0 0 42px; }
.light { width: 24px; height: 24px; border-radius: 50%; display: block; }
.red { background: #ed6a5e; }
.yellow { background: #f5bf4f; }
.green { background: #61c554; }
.tabs { display: flex; margin: 10px 0 0 30px; }
.tab {
  position: relative;
  width: 258px;
  height: 68px;
  display: flex;
  align-items: center;
  padding: 0 0 12px 23px;
  color: #dedede;
  font-size: 24px;
}
.tab::after { content: ""; position: absolute; right: -1px; top: 13px; width: 2px; height: 32px; background: #4a4a4a; }
.tab.active::after, .tab:nth-child(2)::after { display: none; }
.tab.active::before {
  content: "";
  position: absolute;
  left: 8px; top: 0; right: 4px; bottom: 0;
  background: #3b3b3b;
  border-radius: 24px 24px 0 0;
}
.tab > * { position: relative; }
.tab > .flare { position: absolute; bottom: 0; width: 18px; height: 18px; }
.flare-l { left: -10px; background: radial-gradient(circle at 0 0, transparent 17.500px, #3b3b3b 18px); }
.flare-r { right: -14px; background: radial-gradient(circle at 100% 0, transparent 17.500px, #3b3b3b 18px); }
.fav { width: 32px; height: 32px; flex: none; }
.tab-t {
  width: 127px;
  margin-left: 17px;
  white-space: nowrap;
  overflow: hidden;
  -webkit-mask-image: linear-gradient(90deg, #000 63%, transparent 92%);
  mask-image: linear-gradient(90deg, #000 63%, transparent 92%);
}
.tab-t.tab-full { -webkit-mask-image: none; mask-image: none; }
.tab-x { width: 16px; height: 16px; margin-left: 15px; color: #e8e8e8; flex: none; }
.tab-plus { width: 20px; height: 20px; margin: 30px 0 0 22px; flex: none; }
.tab-more {
  width: 56px; height: 56px;
  margin: 10px 12px 0 auto;
  background: #3b3b3b;
  border-radius: 24px;
  display: flex; align-items: center; justify-content: center;
}
.tab-more-i { width: 20px; height: 14px; color: #e4e4e4; }

.chrome-bar {
  flex: 0 0 92px;
  display: flex;
  align-items: center;
  background: #3b3b3b;
  border-radius: 18px 18px 0 0;
  padding-left: 30px;
}
.nav-i { width: 28px; height: 28px; flex: none; }
.nav-fwd { margin-left: 43px; }
.nav-rel { margin-left: 45px; }
.omnibox {
  flex: 1;
  height: 68px;
  margin-left: 38px;
  display: flex;
  align-items: center;
  background: #282828;
  border-radius: 34px;
  padding: 0 32px 0 10px;
}
.site-i {
  width: 48px; height: 48px; flex: none;
  border-radius: 50%;
  background: #3b3b3b;
  display: flex; align-items: center; justify-content: center;
}
.site-i svg { width: 28px; height: 28px; }
.url { margin-left: 16px; flex: 1; font-size: 27.900px; color: #dcdcdc; white-space: nowrap; overflow: hidden; }
.omni-i { flex: none; }
.omni-clip { width: 28px; height: 32px; margin-right: 33px; }
.omni-star { width: 32px; height: 32px; }
.chrome-right { flex: 0 0 312px; display: flex; align-items: center; padding-left: 38px; }
.cr-list { width: 32px; height: 32px; }
.cr-side { width: 28px; height: 32px; margin-left: 40px; }
.cr-avatar {
  width: 40px; height: 40px; margin-left: 38px;
  border-radius: 50%;
  background: #a548b8;
  color: #eee;
  font-size: 22px;
  display: flex; align-items: center; justify-content: center;
}
.cr-dots { width: 8px; height: 32px; margin-left: 48px; }

.figma-bar {
  flex: 0 0 98px;
  display: flex;
  align-items: stretch;
  background: #2c2c2c;
  border-top: 2px solid #444;
  border-bottom: 2px solid #444;
}
.tools { display: flex; width: 808px; flex: none; }
.tool { width: 95px; display: flex; align-items: center; gap: 10px; padding-left: 25px; flex: none; }
.tool-logo { width: 104px; padding-left: 22px; gap: 7px; }
.tool-on { width: 96px; background: #3f88e3; }
.tool-plain { width: 80px; padding-left: 24px; }
.ti { width: 36px; height: 36px; flex: none; }
.ti-hand { height: 40px; }
.chev { width: 14px; height: 10px; color: #e4e4e4; flex: none; }
.crumb { display: flex; align-items: center; margin-left: 502px; font-size: 28px; }
.crumb-a { color: #8f8f8f; }
.crumb-sl { width: 2px; height: 34px; background: #666; transform: rotate(14deg); margin: 0 20px; }
.crumb-b { color: #f0f0f0; }
.crumb .chev { margin-left: 22px; }
.fig-right { margin-left: auto; display: flex; align-items: center; padding-right: 26px; }
.pill {
  width: 101px; height: 64px;
  display: flex; align-items: center;
  background: #444;
  border-radius: 32px;
  padding-left: 9px;
}
.avatar-c {
  width: 48px; height: 48px;
  border-radius: 50%;
  background: #5f69bc;
  display: flex; align-items: center; justify-content: center;
  font-size: 22px; font-weight: 600;
  color: #f0f0f0;
}
.pill .chev { margin-left: 15px; }
.share {
  width: 108px; height: 64px;
  margin-left: 16px;
  background: #3f88e3;
  border: 0;
  border-radius: 12px;
  color: #fff;
  font: 600 22px Inter, sans-serif;
}
.devtoggle { width: 112px; height: 64px; margin-left: 16px; background: #444; border-radius: 32px; padding: 8px; }
.dev-knob {
  width: 48px; height: 48px;
  border-radius: 50%;
  background: #7a7a7a;
  display: flex; align-items: center; justify-content: center;
}
.dev-knob svg { width: 30px; height: 22px; }
.play { width: 24px; height: 32px; margin-left: 49px; }
.chev-play { margin-left: 14px; }
.aq { color: #e9b43a; font-size: 22px; margin-left: 46px; }
.zoom-v { font-size: 23px; color: #f0f0f0; margin-left: 53px; }
.chev-zoom { margin-left: 11px; }

/* workspace */
.workspace { flex: 0 0 1425px; display: flex; overflow: hidden; border-radius: 0 0 22px 22px; }
.layers {
  flex: 0 0 482px;
  background: #2c2c2c;
  border-left: 2px solid #4a4a4a;
  border-right: 2px solid #4a4a4a;
  font-size: 22px;
  overflow: hidden;
}
.lp-head {
  height: 82px;
  display: flex;
  align-items: center;
  padding: 0 0 0 34px;
  border-bottom: 2px solid #444;
}
.lp-search { width: 24px; height: 24px; flex: none; }
.lp-tab { font-weight: 600; margin-left: 20px; }
.lp-tab.lp-dim { color: #a6a6a6; margin-left: 30px; }
.lp-page { margin-left: 64px; }
.lp-chev { margin-left: 12px; color: #8a8a8a; }
.rows { list-style: none; margin: 0; padding: 0; font-feature-settings: "zero" 1; letter-spacing: .1px; }
.row { height: 64px; display: flex; align-items: center; padding: 2px 0 0 34px; color: #f0f0f0; white-space: nowrap; }
.row.child { padding-left: 82px; }
.row.strong { font-weight: 600; letter-spacing: -.05px; }
.li { width: 22px; height: 22px; margin-right: 22px; color: #7d7d7d; flex: none; }
.li-w { width: 24px; margin: 0 20px 0 -1px; }
.li-dim { color: #7d7d7d; }
.strong .li { color: #f2f2f2; }
.strong .li-dim { color: #7d7d7d; }
.strong .li-thumb { margin-right: 22px; margin-left: 4px; }
.lock { width: 16px; height: 20px; margin-left: 32px; color: #f2f2f2; flex: none; }

.canvas {
  position: relative;
  flex: 1;
  overflow: hidden;
  background: linear-gradient(#fff calc(100% - 70px), #ebebeb);
  color: #000;
}
.box { position: absolute; background: #d9d9d9; }
.box-main { left: 145px; top: 211px; width: 608px; height: 427px; }
.box-emp { left: 930px; top: 225px; width: 325px; height: 426px; }
.box-mgmt { left: 1437px; top: 225px; width: 396px; height: 426px; }
.box-full { left: 470px; top: 889px; width: 563px; height: 427px; }
.box-part { left: 1212px; top: 879px; width: 563px; height: 426px; }
.arrows { position: absolute; left: 0; top: 0; width: 2028px; height: 1425px; }
.node { position: absolute; margin: 0; padding: 0; white-space: pre; }
.big { font-size: 54px; font-weight: 600; line-height: 62px; letter-spacing: -.5px; }
.body { font-size: 29px; font-weight: 500; line-height: 34.8px; letter-spacing: -1.05px; }
.sub { font-size: 33px; font-weight: 500; line-height: 40px; letter-spacing: -.15px; }
.mgmt-h { font-size: 36px; font-weight: 500; line-height: 44px; letter-spacing: -.55px; }
.mgmt-l { font-size: 37.800px; font-weight: 500; line-height: 45.800px; letter-spacing: -1.45px; }
.child-h { font-size: 34px; font-weight: 500; line-height: 42px; letter-spacing: -.8px; }
.num { list-style: none; }
.num li { position: relative; }
.num li::before { content: counter(list-item) "."; position: absolute; left: -33px; letter-spacing: 0; }
.mgmt-l li::before { left: -42px; }
.n-main-h { left: 311px; top: 203px; }
.n-main-b { left: 158px; top: 279px; letter-spacing: -1.08px; }
.n-emp-h { left: 935px; top: 173px; letter-spacing: -.7px; }
.n-emp-s { left: 935px; top: 235px; }
.n-emp-l { left: 990px; top: 332px; letter-spacing: -.72px; }
.n-mg-h { left: 1458px; top: 196px; }
.n-mg-l { left: 1485px; top: 291px; }
.n-full-h { left: 493px; top: 814px; }
.n-full-c { left: 489px; top: 925px; }
.n-full-1 { left: 540px; top: 1030px; }
.n-full-2 { left: 498px; top: 1078px; }
.n-full-3 { left: 532px; top: 1158px; }
.n-full-4 { left: 492px; top: 1192px; }
.n-part-h { left: 1224px; top: 814px; }
.n-part-c { left: 1221px; top: 925px; }
.n-part-1 { left: 1272px; top: 1030px; }
.n-part-2 { left: 1229px; top: 1078px; }
.n-part-3 { left: 1264px; top: 1158px; }
.n-part-4 { left: 1223px; top: 1192px; }
.scroll-v { position: absolute; left: 2006px; top: 784px; width: 12px; height: 183px; background: #9b9b9b; border-radius: 6px; }
.scroll-h { position: absolute; left: 1613px; top: 1404px; width: 215px; height: 12px; background: #a3a3a3; border-radius: 6px; }

.props {
  position: relative;
  flex: 0 0 482px;
  background: #2c2c2c;
  border-left: 2px solid #4a4a4a;
  font-size: 22px;
}
.pr-head { height: 82px; display: flex; align-items: center; gap: 31px; padding: 0 0 0 32px; border-bottom: 2px solid #444; }
.pr-tab { font-weight: 600; }
.pr-dim { color: #a6a6a6; font-weight: 500; }
.pr-page { height: 162px; border-bottom: 2px solid #444; padding: 34px 35px 0 32px; }
.pr-label { display: block; font-weight: 600; line-height: 28px; }
.pr-fill { display: flex; align-items: center; margin-top: 34px; height: 32px; }
.swatch { width: 32px; height: 32px; background: #e5e5e5; border-radius: 2px; flex: none; }
.hex { margin-left: 16px; width: 146px; }
.pct { flex: 1; }
.pr-eye { width: 26px; height: 18px; }
.pr-sec {
  height: 98px;
  display: flex;
  align-items: center;
  justify-content: space-between;
  padding: 0 35px 0 32px;
  border-bottom: 2px solid #444;
  color: #b0b0b0;
}
.pr-sec b { font-weight: 600; }
.pr-i { width: 24px; height: 28px; }
.help {
  position: absolute;
  left: 384px; top: 1330px;
  width: 64px; height: 64px;
  border: 0;
  border-radius: 50%;
  background: #1e1e1e;
  color: #f0f0f0;
  font: 400 30px Inter, sans-serif;
}

/* dock */
.dock {
  position: relative;
  margin: 2px 0 0 105px;
  width: 2782px;
  height: 143px;
  display: flex;
  align-items: flex-start;
  padding: 19px 0 0 18px;
  background: #353430;
  border: 2px solid #55544e;
  border-radius: 44px;
}
.app { position: relative; width: 91px; height: 92px; margin-right: 30px; flex: none; }
.app svg { display: block; width: 91px; height: 92px; }
.app.run::after {
  content: "";
  position: absolute;
  left: 42px; top: 111px;
  width: 7px; height: 8px;
  background: #b8b8b4;
  border-radius: 50%;
}
.badge-n {
  position: absolute;
  right: -20px; top: -11px;
  width: 42px; height: 42px;
  border-radius: 50%;
  background: #e0483a;
  color: #fff;
  font-size: 24px;
  display: flex; align-items: center; justify-content: center;
}
.badge-t {
  position: absolute;
  left: -12px; top: -10px;
  width: 118px; height: 42px;
  border-radius: 21px;
  background: rgba(226, 72, 58, .93);
  color: #fff;
  font-size: 20px;
  display: flex; align-items: center; justify-content: center;
  white-space: nowrap;
}
.dock-sep { width: 2px; height: 108px; margin: -5px 41px 0 13px; background: #8a8984; flex: none; }
.dock-sep2 { margin: -5px 33px 0 12px; }
.thumbs { display: flex; gap: 14px; align-items: flex-end; flex: none; height: 96px; }
.thumb { position: relative; width: 107px; height: 60px; margin-bottom: 20px; flex: none; }
.thumb-tall { height: 80px; margin-bottom: 10px; }
.thumb-dark { background: #16171a; }
.thumb-light { background: #f3f3f9; border-top: 5px solid #55539a; }
.thumb-lines {
  position: absolute;
  inset: 6px 16px 8px 8px;
  background: repeating-linear-gradient(rgba(90, 110, 115, .55) 0 1px, transparent 1px 4px);
}
.thumb-slack { left: 26px; background: repeating-linear-gradient(rgba(70, 120, 150, .6) 0 1px, transparent 1px 5px); }
.thumb-teams { left: 26px; background: repeating-linear-gradient(#d0d0f2 0 2px, transparent 2px 6px); }
.thumb-mail { left: 40px; background: repeating-linear-gradient(rgba(110, 125, 145, .6) 0 1px, transparent 1px 5px); }
.thumb-i { position: absolute; right: 2px; bottom: -21px; width: 34px; height: 34px; }
.thumb-tall .thumb-i { bottom: -11px; }
.trash { width: 80px; height: 106px; margin: -9px 0 0 28px; flex: none; }
```
